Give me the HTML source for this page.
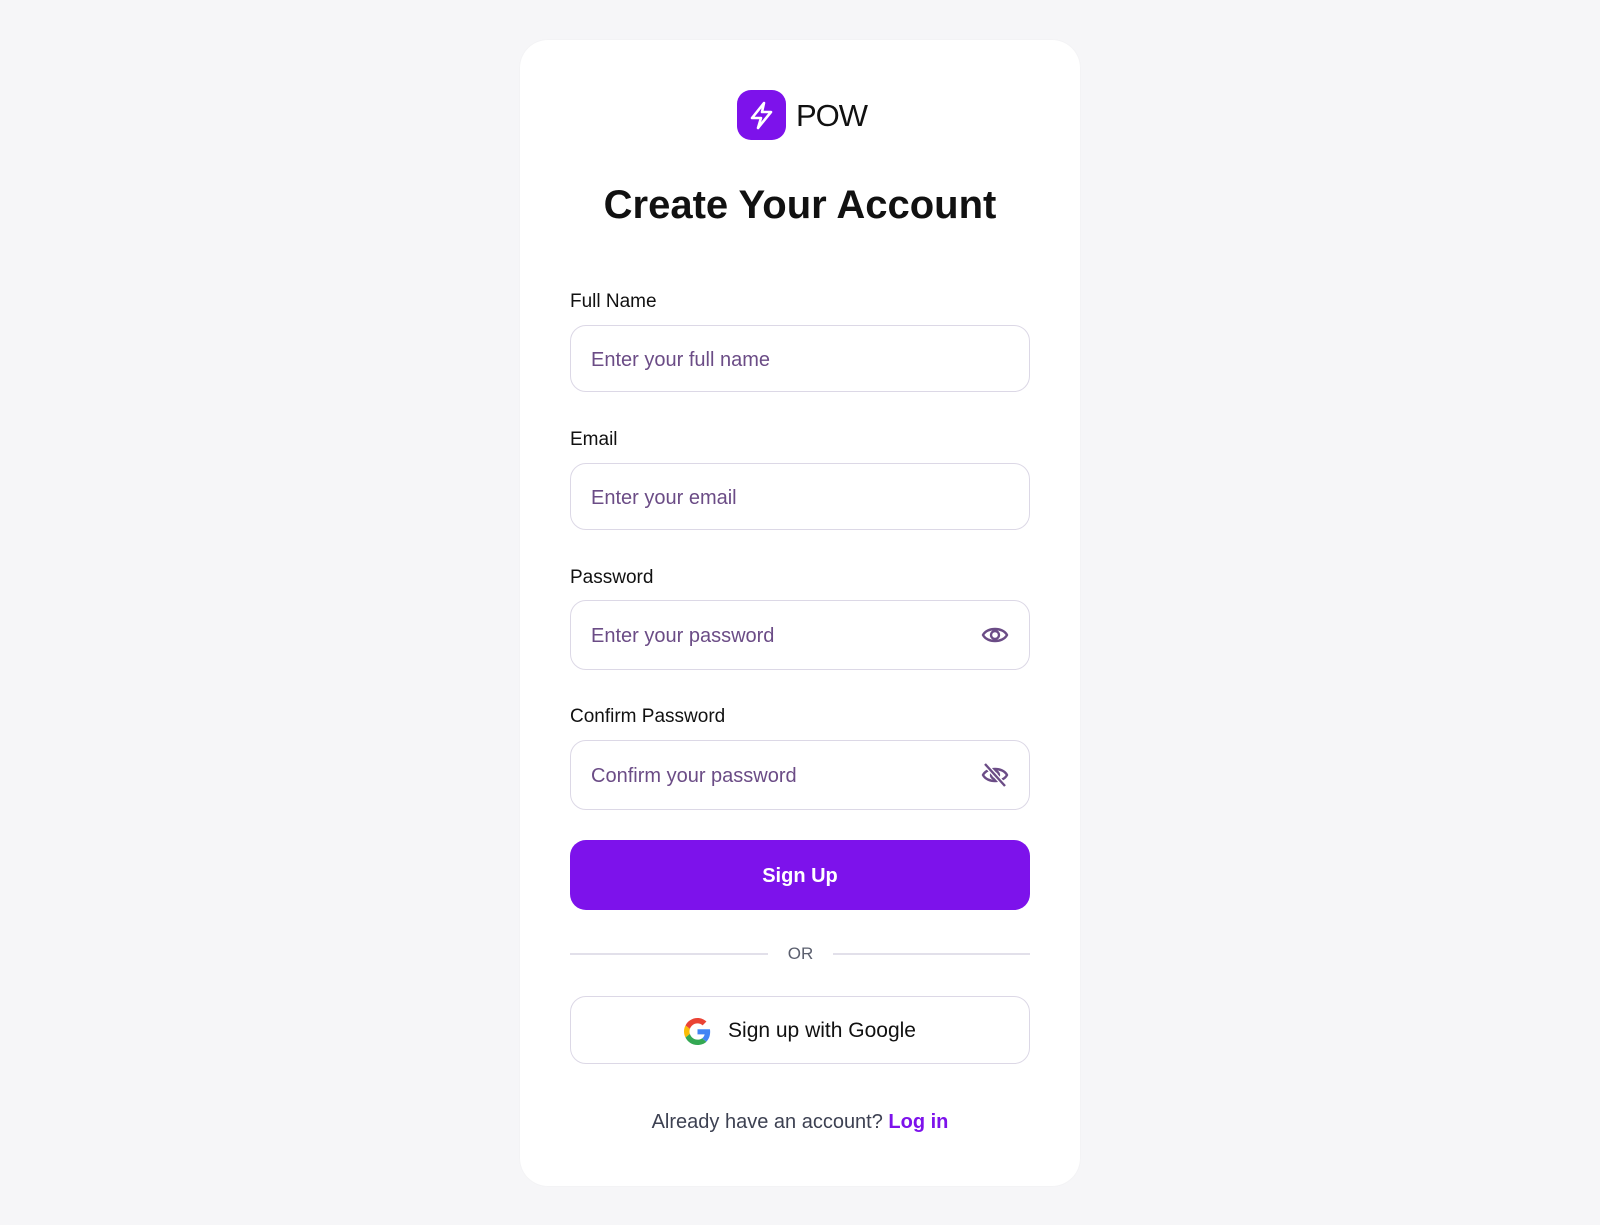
<!DOCTYPE html>
<html><head><meta charset="utf-8"><style>
*{box-sizing:border-box;margin:0;padding:0}
body{width:1600px;height:1225px;background:#f6f6f8;font-family:"Liberation Sans",sans-serif;position:relative;overflow:hidden}
.card{position:absolute;left:520px;top:40px;width:560px;height:1146px;background:#fff;border-radius:28px;box-shadow:0 0 2px rgba(0,0,0,.04)}
.abs{position:absolute}
.logo{left:737px;top:90px;width:49px;height:50px;background:#7d12eb;border-radius:14px}
.pow{left:796px;top:98px;font-size:31px;color:#111;letter-spacing:-1px}
.title{left:0;width:1600px;text-align:center;top:183px;font-size:40px;font-weight:600;color:#111}
.lbl{left:570px;font-size:19px;color:#111}
.inp{left:570px;width:460px;border:1.5px solid #dcd8e6;border-radius:16px;padding-left:20px;padding-top:3px;font-size:20px;color:#6b4c86;display:flex;align-items:center}
.btn{left:570px;top:840px;width:460px;height:70px;background:#7d12eb;border-radius:16px;color:#fff;font-size:20px;font-weight:bold;display:flex;align-items:center;justify-content:center;padding-top:2px}
.line{height:1.5px;background:#e2e0ea;top:953px}
.g{left:570px;top:996px;width:460px;height:68px;border:1.5px solid #dcd8e6;border-radius:16px;display:flex;align-items:center;justify-content:center;font-size:21px;color:#111;padding-top:2px}
</style></head><body>
<div class="card"></div>
<div class="abs logo"><svg width="49" height="50" viewBox="0 0 49 50"><path d="M27 13 L15 28 H24 L21 38 L34 22 H25 Z" fill="none" stroke="#fff" stroke-width="2.6" stroke-linejoin="round"/></svg></div>
<div class="abs pow">POW</div>
<div class="abs title">Create Your Account</div>
<div class="abs lbl" style="top:291px">Full Name</div>
<div class="abs inp" style="top:325px;height:67px">Enter your full name</div>
<div class="abs lbl" style="top:429px">Email</div>
<div class="abs inp" style="top:463px;height:67px">Enter your email</div>
<div class="abs lbl" style="top:567px">Password</div>
<div class="abs inp" style="top:600px;height:70px">Enter your password</div>
<svg class="abs" style="left:981px;top:624px" width="28" height="22" viewBox="0 0 28 22"><path d="M2 11 C6 3 22 3 26 11 C22 19 6 19 2 11Z" fill="none" stroke="#6b4c86" stroke-width="2.4"/><circle cx="14" cy="11" r="4" fill="none" stroke="#6b4c86" stroke-width="2.4"/></svg>
<div class="abs lbl" style="top:706px">Confirm Password</div>
<div class="abs inp" style="top:740px;height:70px">Confirm your password</div>
<svg class="abs" style="left:981px;top:762px" width="28" height="26" viewBox="0 0 28 26"><path d="M2 13 C6 5 22 5 26 13 C22 21 6 21 2 13Z" fill="none" stroke="#6b4c86" stroke-width="2.4"/><circle cx="14" cy="13" r="4" fill="none" stroke="#6b4c86" stroke-width="2.4"/><path d="M4 2 L24 24" stroke="#fff" stroke-width="5"/><path d="M4 2 L24 24" stroke="#6b4c86" stroke-width="2.4"/></svg>
<div class="abs btn">Sign Up</div>
<div class="abs line" style="left:570px;width:198px"></div>
<div class="abs line" style="left:833px;width:197px"></div>
<div class="abs" style="left:768px;width:65px;text-align:center;top:944px;font-size:17px;color:#5b5f6e">OR</div>
<div class="abs g"><svg width="27" height="27" viewBox="0 0 48 48" style="margin-right:17px"><path fill="#EA4335" d="M24 9.5c3.5 0 6.6 1.2 9.1 3.6l6.8-6.8C35.8 2.4 30.3 0 24 0 14.6 0 6.6 5.4 2.6 13.3l7.9 6.1C12.4 13.7 17.7 9.5 24 9.5z"/><path fill="#4285F4" d="M46.5 24.5c0-1.6-.1-3.1-.4-4.5H24v9h12.7c-.6 2.9-2.2 5.4-4.7 7.1l7.7 6c4.5-4.2 6.8-10.4 6.8-17.6z"/><path fill="#FBBC05" d="M10.5 28.6c-.5-1.4-.8-3-.8-4.6s.3-3.2.8-4.6l-7.9-6.1C.9 16.5 0 20.1 0 24s.9 7.5 2.6 10.7l7.9-6.1z"/><path fill="#34A853" d="M24 48c6.5 0 11.9-2.1 15.9-5.8l-7.700-6c-2.2 1.5-5 2.3-8.2 2.300-6.3 0-11.6-4.2-13.5-10l-7.9 6.1C6.6 42.6 14.6 48 24 48z"/></svg>Sign up with Google</div>
<div class="abs" style="left:0;width:1600px;text-align:center;top:1111px;font-size:20px;color:#3d4152">Already have an account? <span style="color:#7d12eb;font-weight:bold">Log in</span></div>
</body></html>
